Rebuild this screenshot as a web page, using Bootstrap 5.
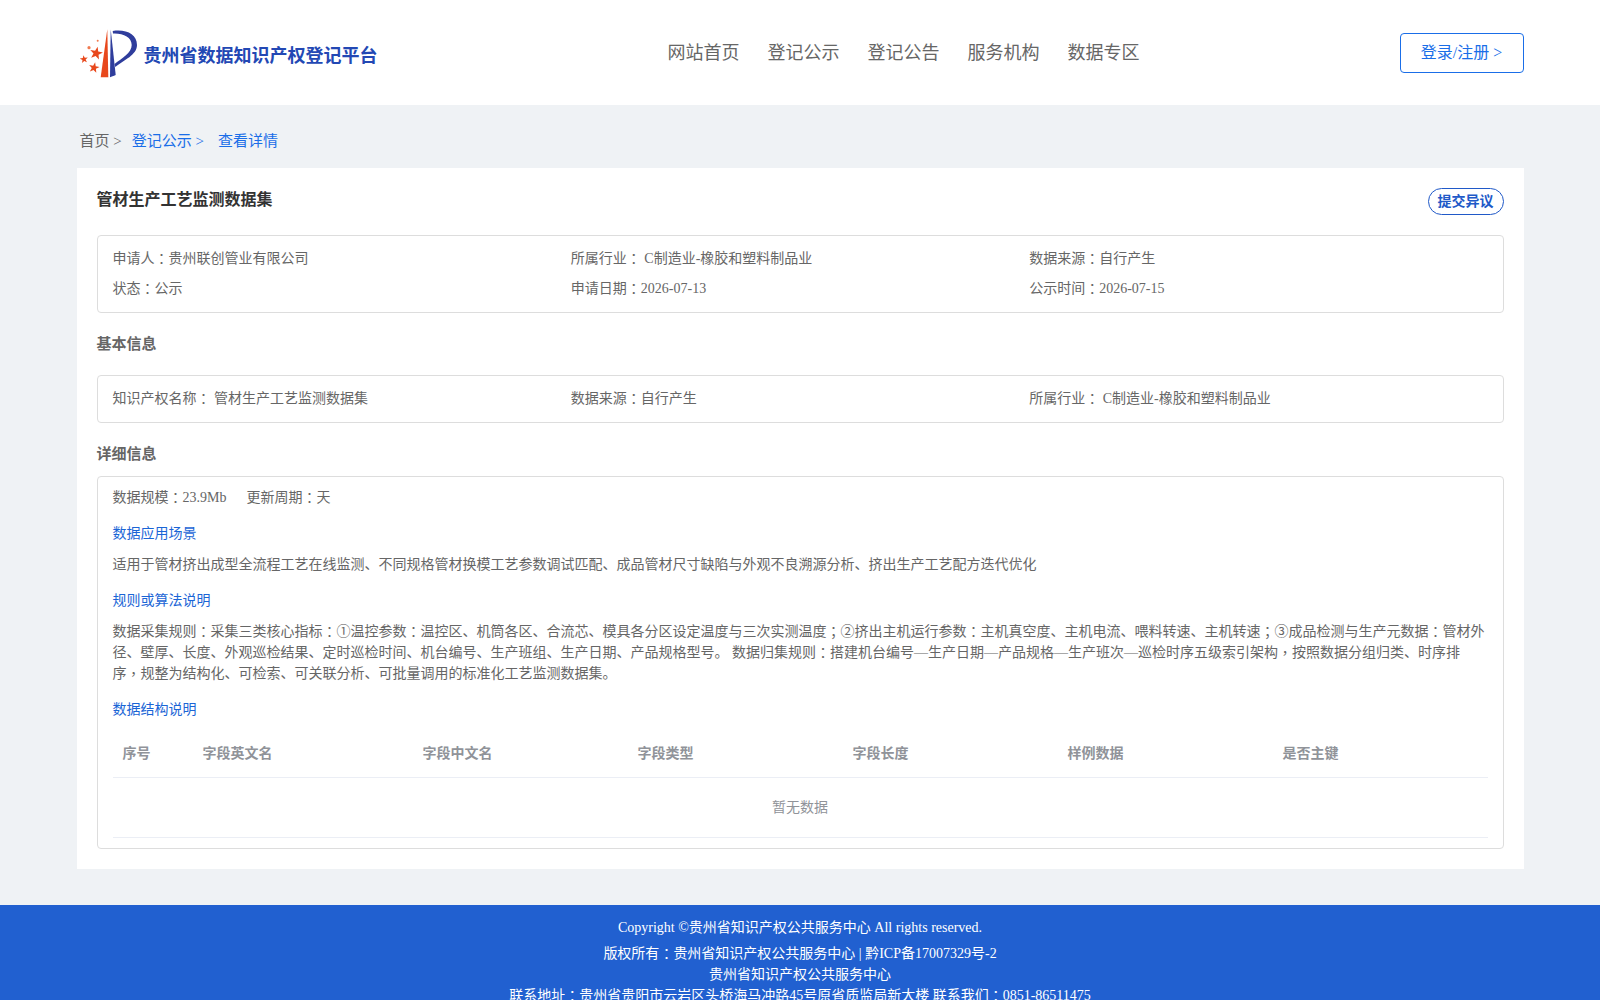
<!DOCTYPE html>
<html lang="zh-CN">
<head>
  <meta charset="UTF-8">
  <title>贵州省数据知识产权登记平台</title>
  <link href="https://cdn.jsdelivr.net/npm/bootstrap@5.3.2/dist/css/bootstrap.min.css" rel="stylesheet">
  <style>
    html, body { height: 1000px; overflow: hidden; }
    body { background: #eff2f5; font-family: "Liberation Serif", "Noto Sans CJK SC", serif; font-size: 14px; color: #666; }
    .wrap { width: 1447px; margin: 0 auto; }
    /* centred colons and commas, the TC cut has them */
    .pm { font-family: "Noto Sans CJK TC", sans-serif; font-feature-settings: "locl" 0; line-height: 0; position: relative; top: 1px; }

    .top-bar { background: #fff; height: 105px; }
    .top-bar .wrap { height: 100%; }
    .brand-name { font-size: 18px; font-weight: 700; color: #2348b4; margin-left: 6px; margin-top: 8px; }
    .logo-box { padding-left: 3px; }
    .top-menu { gap: 28px; margin-left: 290px; margin-top: 1px; }
    .top-menu a { font-size: 18px; color: #666; text-decoration: none; }
    .login-btn { width: 124px; height: 40px; border: 1px solid #1a6ee8; border-radius: 4px; color: #1a6ee8; font-size: 16px; background: #fff; }

    .crumbs { height: 63px; padding: 10px 3px 0; font-size: 15px; }
    .crumbs a { color: #1a6ee8; text-decoration: none; }
    .crumbs .c-one { margin-right: 10px; }
    .crumbs .c-two { margin-right: 14px; }

    .sheet { background: #fff; padding: 20px; height: 701px; }
    .sheet-title { font-size: 16px; font-weight: 700; color: #333; margin: 0; line-height: 24px; }
    .report-btn { border: 1px solid #2059c8; border-radius: 14px; color: #2059c8; background: #fff; font-size: 14px; font-weight: 700; height: 27px; padding: 0 9px; line-height: 24px; }

    .info-box { border: 1px solid #ddd; border-radius: 4px; padding: 0 15px; }
    .box-a { margin-top: 20px; height: 78px; padding-top: 13px; }
    .box-b { height: 48px; padding-top: 13px; }
    .box-c { height: 373px; padding-top: 10px; }
    .info-line { display: flex; line-height: 20px; margin-bottom: 10px; }
    .info-line > span { width: 33.333%; }
    .sec-head { font-size: 15px; font-weight: 700; color: #666; line-height: 20px; }
    .head-b { margin: 21px 0 21px; }
    .head-c { margin: 21px 0 12px; }

    .blue-label { color: #1a65d6; line-height: 20px; margin: 0; }
    .para { line-height: 21px; margin: 0; }
    .para-gap { margin-top: 10px; }
    .cycle { margin-left: 20px; }
    .field-table { width: 100%; table-layout: fixed; margin-top: 10px; border-collapse: collapse; }
    .field-table th { height: 47px; font-weight: 700; color: #909399; padding: 0 10px; border-bottom: 1px solid #ebeef5; }
    .field-table td { height: 60px; text-align: center; color: #909399; border-bottom: 1px solid #ebeef5; }

    .foot { background: #2160d0; height: 200px; margin-top: 36px; color: #fff; text-align: center; line-height: 21px; padding-top: 12px; }
    .foot p { margin: 0; }
    .foot .first-line { margin-bottom: 5px; }
  </style>
</head>
<body>

  <header class="top-bar">
    <div class="wrap d-flex align-items-center">
      <div class="logo-box d-flex align-items-center">
        <svg width="58" height="50" viewBox="0 0 58 50">
          <defs>
            <polygon id="st" points="0,-1 .235,-.324 .951,-.309 .38,.124 .588,.809 0,.4 -.588,.809 -.38,.124 -.951,-.309 -.235,-.324"/>
          </defs>
          <!-- orange wedge -->
          <path d="M27.300 1.300 L20.700 49.300 L28.300 49.300 Z" fill="#e8481c"/>
          <!-- blue stripe and crescent -->
          <path d="M30.700 1.300 L35.700 47 C33.500 48 31.500 48.800 30 49.300 Z" fill="#2f3d9c"/>
          <path d="M32.700 3 C46 1 57 6 57 17 C57 27 44 32 35.300 39 L34.500 36 C42 30 51.700 25 51.700 17 C51.700 9 43 5 33 5.500 Z" fill="#2f3d9c"/>
          <g fill="#e8481c">
            <use href="#st" transform="translate(16.200 25.300) rotate(12) scale(6.800)"/>
            <use href="#st" transform="translate(4 31.300) rotate(-8) scale(4.200)"/>
            <use href="#st" transform="translate(14 39.700) rotate(12) scale(5.600)"/>
          </g>
          <circle cx="9" cy="19.700" r="1.600" fill="#f07a50"/>
          <circle cx="17.700" cy="12.700" r="1" fill="#f07a50"/>
        </svg>
        <span class="brand-name">贵州省数据知识产权登记平台</span>
      </div>
      <nav class="top-menu d-flex">
        <a href="#">网站首页</a>
        <a href="#">登记公示</a>
        <a href="#">登记公告</a>
        <a href="#">服务机构</a>
        <a href="#">数据专区</a>
      </nav>
      <button class="login-btn ms-auto p-0">登录/注册 &gt;</button>
    </div>
  </header>

  <main class="wrap">
    <div class="crumbs d-flex align-items-center">
      <span class="c-one">首页 &gt;</span>
      <a href="#" class="c-two">登记公示 &gt;</a>
      <a href="#">查看详情</a>
    </div>

    <section class="sheet">
      <div class="d-flex justify-content-between align-items-start">
        <h1 class="sheet-title">管材生产工艺监测数据集</h1>
        <button class="report-btn">提交异议</button>
      </div>

      <div class="info-box box-a">
        <div class="info-line"><span>申请人<span class="pm">：</span>贵州联创管业有限公司</span><span>所属行业<span class="pm">：</span> C制造业-橡胶和塑料制品业</span><span>数据来源<span class="pm">：</span>自行产生</span></div>
        <div class="info-line"><span>状态<span class="pm">：</span>公示</span><span>申请日期<span class="pm">：</span>2026-07-13</span><span>公示时间<span class="pm">：</span>2026-07-15</span></div>
      </div>

      <div class="sec-head head-b">基本信息</div>
      <div class="info-box box-b">
        <div class="info-line"><span>知识产权名称<span class="pm">：</span> 管材生产工艺监测数据集</span><span>数据来源<span class="pm">：</span>自行产生</span><span>所属行业<span class="pm">：</span> C制造业-橡胶和塑料制品业</span></div>
      </div>

      <div class="sec-head head-c">详细信息</div>
      <div class="info-box box-c">
        <p class="para">数据规模<span class="pm">：</span>23.9Mb<span class="cycle">更新周期<span class="pm">：</span>天</span></p>
        <p class="blue-label mt-3">数据应用场景</p>
        <p class="para para-gap">适用于管材挤出成型全流程工艺在线监测、不同规格管材换模工艺参数调试匹配、成品管材尺寸缺陷与外观不良溯源分析、挤出生产工艺配方迭代优化</p>
        <p class="blue-label mt-3">规则或算法说明</p>
        <p class="para para-gap">数据采集规则<span class="pm">：</span>采集三类核心指标<span class="pm">：</span>①温控参数<span class="pm">：</span>温控区、机筒各区、合流芯、模具各分区设定温度与三次实测温度<span class="pm">；</span>②挤出主机运行参数<span class="pm">：</span>主机真空度、主机电流、喂料转速、主机转速<span class="pm">；</span>③成品检测与生产元数据<span class="pm">：</span>管材外径、壁厚、长度、外观巡检结果、定时巡检时间、机台编号、生产班组、生产日期、产品规格型号。 数据归集规则<span class="pm">：</span>搭建机台编号—生产日期—产品规格—生产班次—巡检时序五级索引架构<span class="pm">，</span>按照数据分组归类、时序排序<span class="pm">，</span>规整为结构化、可检索、可关联分析、可批量调用的标准化工艺监测数据集。</p>
        <p class="blue-label mt-3">数据结构说明</p>
        <table class="field-table">
          <colgroup><col style="width:80px"><col style="width:220px"><col style="width:215px"><col style="width:215px"><col style="width:215px"><col style="width:215px"><col></colgroup>
          <thead>
            <tr><th>序号</th><th>字段英文名</th><th>字段中文名</th><th>字段类型</th><th>字段长度</th><th>样例数据</th><th>是否主键</th></tr>
          </thead>
          <tbody>
            <tr><td colspan="7">暂无数据</td></tr>
          </tbody>
        </table>
      </div>
    </section>
  </main>

  <footer class="foot">
    <p class="first-line">Copyright ©贵州省知识产权公共服务中心 All rights reserved.</p>
    <p>版权所有<span class="pm">：</span>贵州省知识产权公共服务中心 | 黔ICP备17007329号-2</p>
    <p>贵州省知识产权公共服务中心</p>
    <p>联系地址<span class="pm">：</span>贵州省贵阳市云岩区头桥海马冲路45号原省质监局新大楼 联系我们<span class="pm">：</span>0851-86511475</p>
  </footer>

  <script src="https://cdn.jsdelivr.net/npm/bootstrap@5.3.2/dist/js/bootstrap.bundle.min.js"></script>
</body>
</html>
